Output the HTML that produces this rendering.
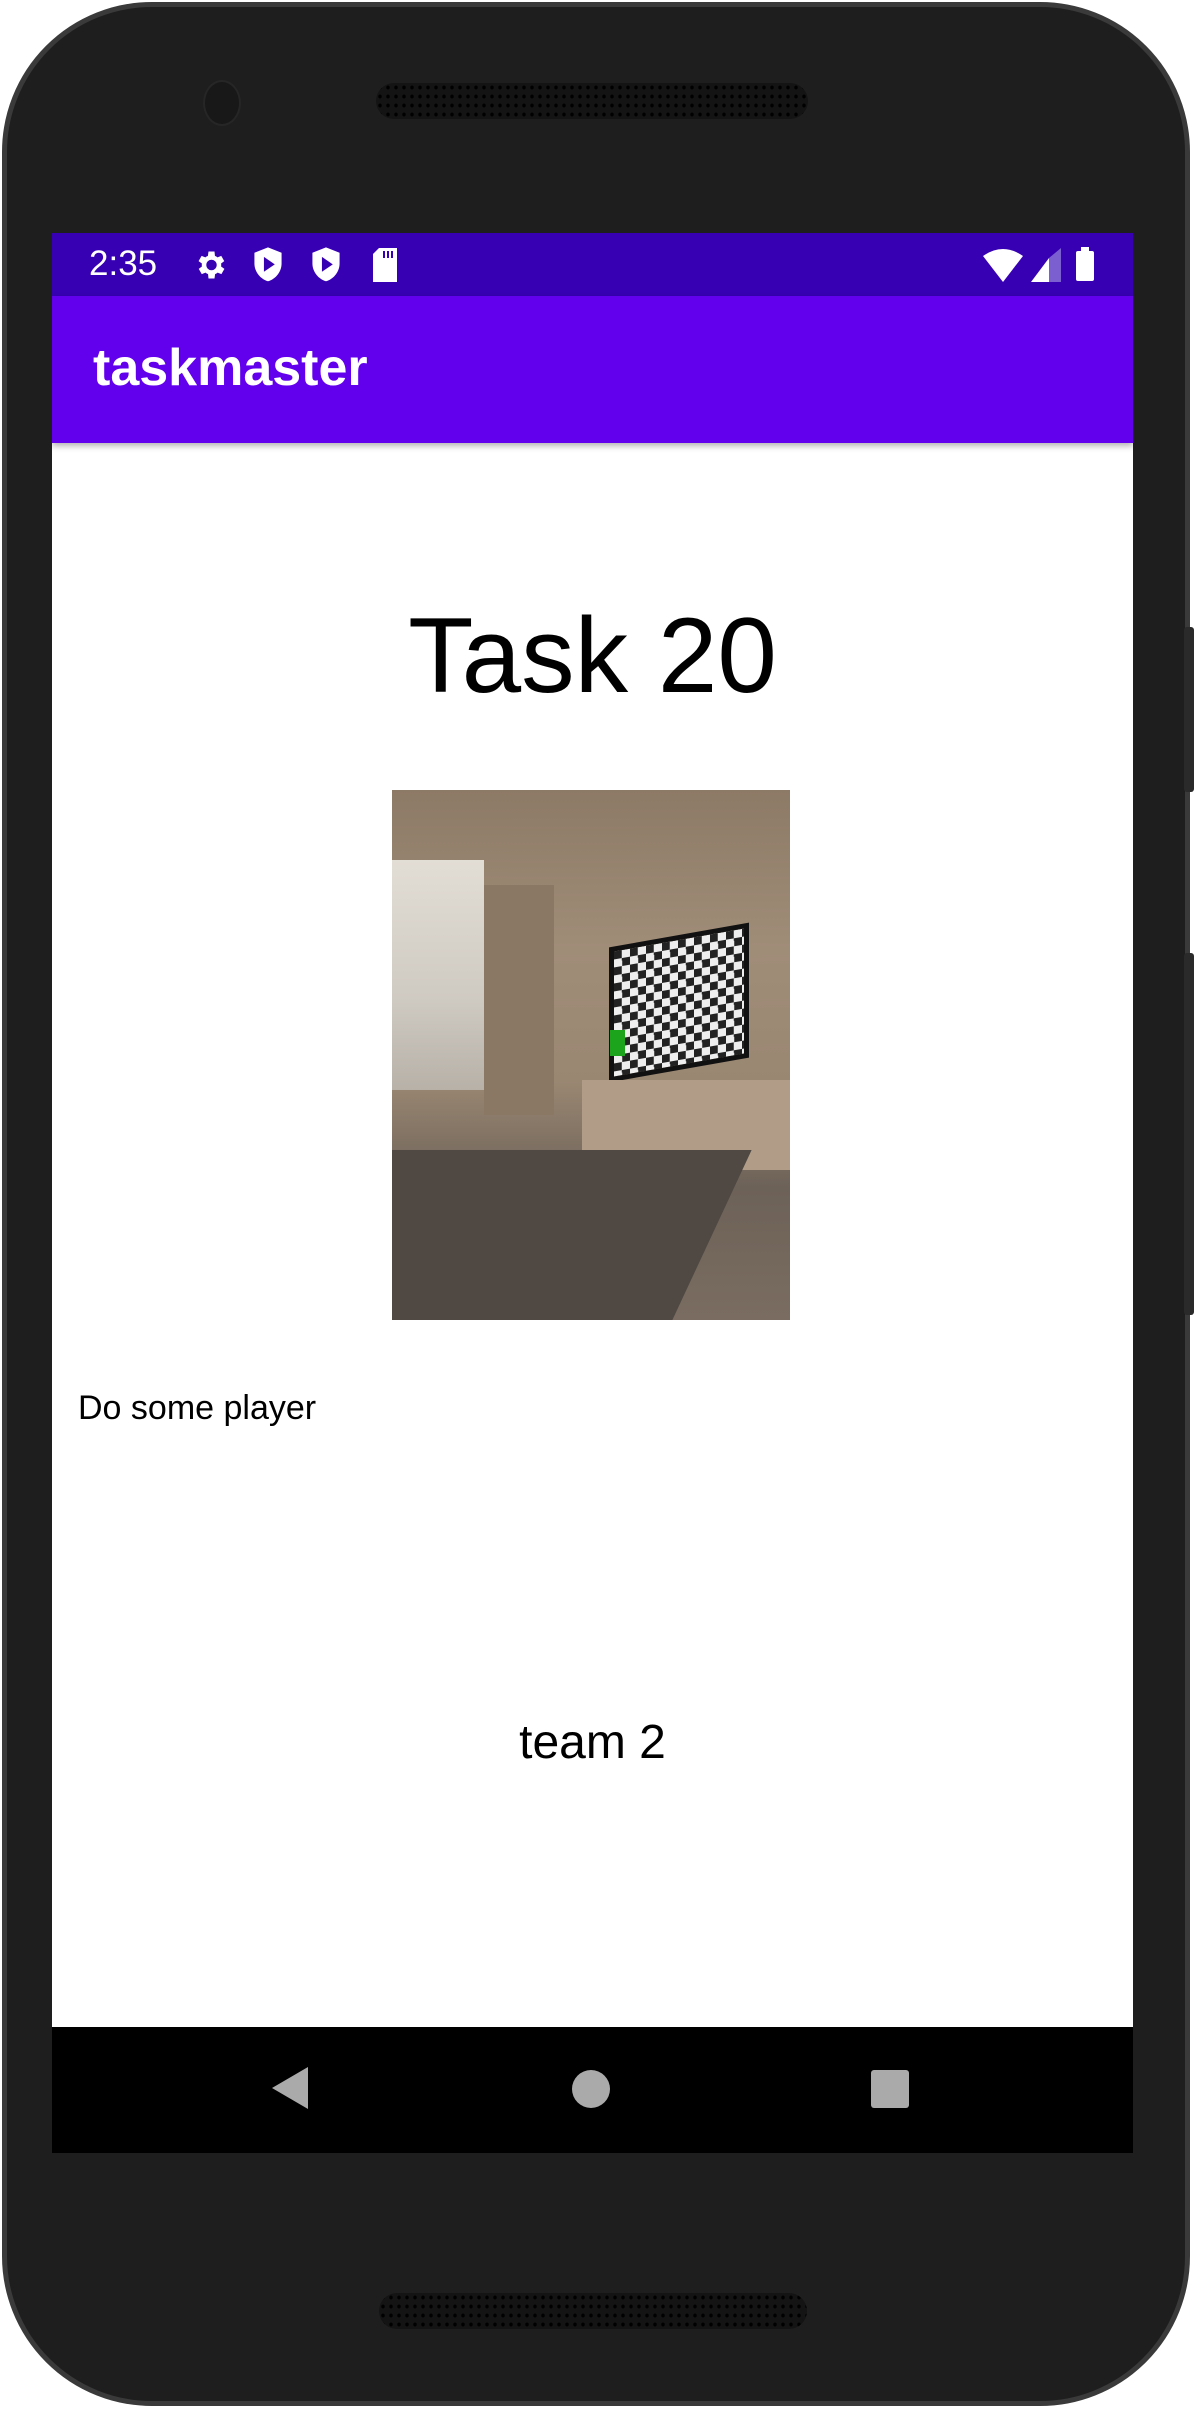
<!DOCTYPE html>
<html><head><meta charset="utf-8"><style>
*{margin:0;padding:0;box-sizing:border-box}
body{width:1194px;height:2409px;background:#fff;position:relative;overflow:hidden;font-family:"Liberation Sans",sans-serif}
.phone{position:absolute;left:2px;top:2px;width:1188px;height:2404px;border-radius:150px;background:#1e1e1e;border:5px solid #3a3a3a}
.btn{position:absolute;background:#2a2a2a;right:0;width:10px;border-radius:3px}
.spk{position:absolute;background:#141414;border-radius:20px;background-image:radial-gradient(#000 1.5px,transparent 2px);background-size:8px 9px}
.screen{position:absolute;left:52px;top:233px;width:1081px;height:1920px;background:#fff;overflow:hidden}
.status{position:absolute;left:0;top:0;width:100%;height:63px;background:#3700b3;color:#fff}
.appbar{position:absolute;left:0;top:63px;width:100%;height:147px;background:#6200ee;box-shadow:0 3px 6px rgba(0,0,0,.3)}
.nav{position:absolute;left:0;top:1794px;width:100%;height:126px;background:#000}
</style></head><body>
<div class="phone"></div>
<div class="btn" style="top:627px;height:165px"></div>
<div class="btn" style="top:953px;height:362px"></div>
<div class="spk" style="left:376px;top:83px;width:432px;height:36px"></div>
<div class="spk" style="left:379px;top:2293px;width:428px;height:36px"></div>
<div style="position:absolute;left:203px;top:80px;width:38px;height:46px;border-radius:50%;background:#181818;border:2px solid #262626"></div>
<div class="screen">
 <div class="status">
  <div style="position:absolute;left:37px;top:11px;font-size:35px">2:35</div>
  <svg style="position:absolute;left:140px;top:14px" width="36" height="36" viewBox="0 0 24 24"><path fill="#fff" d="M19.4 13a7 7 0 0 0 0-2l2.1-1.6-2-3.5-2.5 1a7 7 0 0 0-1.7-1L15 3h-4l-.4 2.9a7 7 0 0 0-1.7 1l-2.5-1-2 3.5L6.6 11a7 7 0 0 0 0 2l-2.1 1.6 2 3.5 2.5-1a7 7 0 0 0 1.7 1L11 21h4l.4-2.9a7 7 0 0 0 1.7-1l2.5 1 2-3.5zM13 15.5a3.5 3.5 0 1 1 0-7 3.5 3.5 0 0 1 0 7z"/></svg>
  <svg style="position:absolute;left:199px;top:13px" width="34" height="38" viewBox="0 0 24 28"><path fill="#fff" d="M12 1 2 5v8c0 6 4.5 11.5 10 13 5.5-1.5 10-7 10-13V5z"/><path fill="#3700b3" d="M9 8v11l8-5.5z"/></svg>
  <svg style="position:absolute;left:257px;top:13px" width="34" height="38" viewBox="0 0 24 28"><path fill="#fff" d="M12 1 2 5v8c0 6 4.5 11.5 10 13 5.5-1.5 10-7 10-13V5z"/><path fill="#3700b3" d="M9 8v11l8-5.5z"/></svg>
  <svg style="position:absolute;left:319px;top:15px" width="28" height="34" viewBox="0 0 28 34"><path fill="#fff" d="M8 0h18v34H2V6z"/><path fill="#3700b3" d="M12 3h2v7h-2zM16 3h2v7h-2zM20 3h2v7h-2z"/></svg>
  <svg style="position:absolute;left:931px;top:15px" width="40" height="34" viewBox="0 0 40 34"><path fill="#fff" d="M0 8Q20-6 40 8L20 34z"/></svg>
  <svg style="position:absolute;left:979px;top:15px" width="30" height="34" viewBox="0 0 30 34"><path fill="#fff" d="M0 34 18 10v24z"/><path fill="#7b5fd0" d="M18 10 30 0v34H18z"/></svg>
  <div style="position:absolute;left:1024px;top:18px;width:18px;height:30px;background:#fff;border-radius:2px"></div>
  <div style="position:absolute;left:1029px;top:14px;width:8px;height:5px;background:#fff"></div>
 </div>
 <div class="appbar"><div style="position:absolute;left:41px;top:42px;color:#fff;font-size:52px;font-weight:bold">taskmaster</div></div>
 <div style="position:absolute;left:0;width:100%;top:360px;text-align:center;font-size:107px;color:#000">Task 20</div>
 <div style="position:absolute;left:340px;top:557px;width:398px;height:530px;overflow:hidden;background:linear-gradient(180deg,#8d7a66 0%,#a08d78 30%,#9a8772 55%,#6d6258 75%,#7a6c60 100%)">
  <div style="position:absolute;left:0;top:70px;width:92px;height:230px;background:linear-gradient(180deg,#e2ddd5,#cfcac2 60%,#b7b1a8)"></div>
  <div style="position:absolute;left:92px;top:95px;width:70px;height:230px;background:#8a7865"></div>
  <div style="position:absolute;left:217px;top:145px;width:140px;height:135px;background:repeating-conic-gradient(#eee 0 25%,#222 0 50%) 0 0/16px 16px;transform:skewY(-10deg);border:5px solid #111"></div>
  <div style="position:absolute;left:218px;top:240px;width:15px;height:26px;background:#1ca51c"></div>
  <div style="position:absolute;left:190px;top:290px;width:208px;height:90px;background:#b19d87"></div>
  <div style="position:absolute;left:0;top:360px;width:360px;height:170px;background:#4f4843;transform:skewX(-25deg);left:-40px"></div>
 </div>
 <div style="position:absolute;left:26px;top:1156px;font-size:34px;color:#000">Do some player</div>
 <div style="position:absolute;left:0;width:100%;top:1482px;text-align:center;font-size:48px;color:#000">team 2</div>
 <div class="nav">
  <svg style="position:absolute;left:218px;top:38px" width="40" height="46" viewBox="0 0 40 46"><path fill="#aaa" d="M38 2v42L2 23z"/></svg>
  <div style="position:absolute;left:520px;top:43px;width:38px;height:38px;border-radius:50%;background:#aaa"></div>
  <div style="position:absolute;left:819px;top:43px;width:38px;height:38px;border-radius:3px;background:#aaa"></div>
 </div>
</div>
</body></html>
